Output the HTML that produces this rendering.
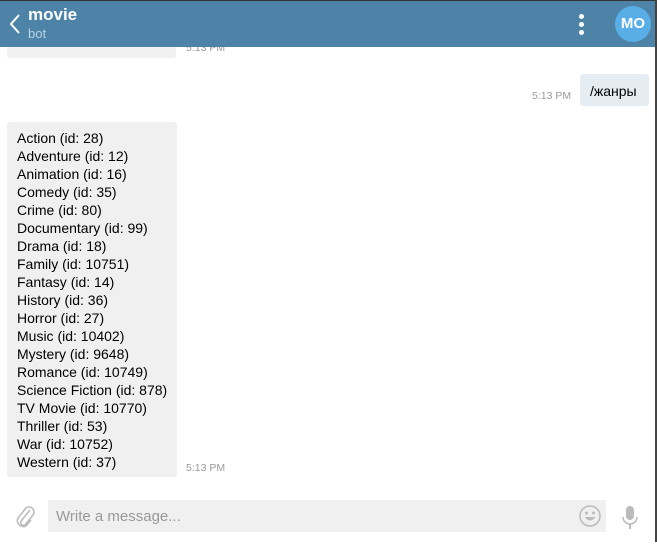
<!DOCTYPE html>
<html><head><meta charset="utf-8"><style>
body{margin:0;width:657px;height:544px;overflow:hidden;background:#fff;font-family:"Liberation Sans",sans-serif;position:relative}
.hdr{position:absolute;left:0;top:0;width:655px;height:46px;background:#4d83a6;border-top:1px solid #333}
.frame{position:absolute;right:0;top:0;width:2px;height:544px;background:#444}
.t{position:absolute;color:#fff}
.b{position:absolute;background:#f0f0f0;border-radius:3px}
.time{position:absolute;font-size:10.5px;color:#999}
.list{position:absolute;left:17px;top:129px;font-size:14px;line-height:18px;color:#000}
</style></head><body>
<div class="b" style="left:7px;top:40px;width:169px;height:18px"></div>
<div class="time" style="left:186px;top:42px">5:13 PM</div>
<div class="hdr">
<svg style="position:absolute;left:8px;top:12px" width="14" height="24"><path d="M11 2 L3 11 L11 20" stroke="#fff" stroke-width="2" fill="none"/></svg>
<div class="t" style="left:28px;top:4px;font-size:17px;font-weight:bold">movie</div>
<div class="t" style="left:28px;top:25px;font-size:13px;color:#b9d2e4">bot</div>
<div style="position:absolute;left:579px;top:13px;width:5px;height:5px;border-radius:3px;background:#fff;box-shadow:0 8px 0 #fff,0 16px 0 #fff"></div>
<div style="position:absolute;left:615px;top:5px;width:36px;height:36px;border-radius:18px;background:#5aaee8;color:#fff;font-weight:bold;font-size:15px;text-align:center;line-height:36px">MO</div>
</div>
<div class="b" style="left:580px;top:74px;width:69px;height:32px;background:#e5edf3"></div>
<div style="position:absolute;left:590px;top:83px;font-size:14px">/жанры</div>
<div class="time" style="left:532px;top:90px">5:13 PM</div>
<div class="b" style="left:7px;top:122px;width:170px;height:355px"></div>
<div class="list">Action (id: 28)<br>Adventure (id: 12)<br>Animation (id: 16)<br>Comedy (id: 35)<br>Crime (id: 80)<br>Documentary (id: 99)<br>Drama (id: 18)<br>Family (id: 10751)<br>Fantasy (id: 14)<br>History (id: 36)<br>Horror (id: 27)<br>Music (id: 10402)<br>Mystery (id: 9648)<br>Romance (id: 10749)<br>Science Fiction (id: 878)<br>TV Movie (id: 10770)<br>Thriller (id: 53)<br>War (id: 10752)<br>Western (id: 37)</div>
<div class="time" style="left:186px;top:462px">5:13 PM</div>
<svg style="position:absolute;left:13px;top:504px" width="24" height="26"><path d="M17 6 L8 17 a3 3 0 0 0 4 4 L20 11 a5 5 0 0 0 -7 -7 L5 14 a6 6 0 0 0 8 8 L18 16" stroke="#bbb" stroke-width="1.6" fill="none"/></svg>
<div class="b" style="left:48px;top:500px;width:558px;height:32px;border-radius:2px"></div>
<div style="position:absolute;left:56px;top:508px;font-size:15px;color:#999">Write a message...</div>
<svg style="position:absolute;left:578px;top:504px" width="24" height="24"><circle cx="12" cy="12" r="10" stroke="#bbb" stroke-width="1.5" fill="none"/><circle cx="8.5" cy="9" r="1.5" fill="#bbb"/><circle cx="15.5" cy="9" r="1.5" fill="#bbb"/><path d="M6.5 13 Q12 20 17.5 13 Z" fill="#bbb"/></svg>
<svg style="position:absolute;left:620px;top:505px" width="20" height="26"><rect x="6" y="1" width="8" height="14" rx="4" fill="#bbb"/><path d="M3 12 a7 7 0 0 0 14 0" stroke="#bbb" stroke-width="1.5" fill="none"/><path d="M10 19 V24" stroke="#bbb" stroke-width="2"/></svg>
<div class="frame"></div>
<div style="position:absolute;left:0;bottom:0;width:657px;height:2px;background:#fff"></div>
</body></html>
